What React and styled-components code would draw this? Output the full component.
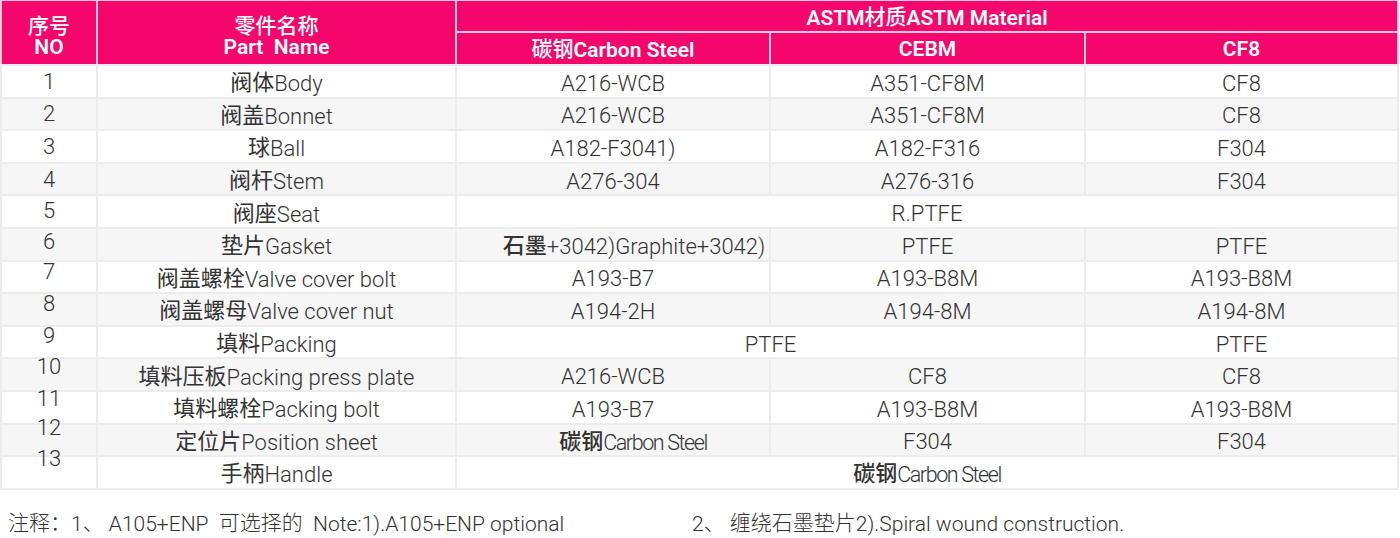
import React from "react";
import styled, { createGlobalStyle } from "styled-components";

const Global = createGlobalStyle`
  html, body { margin: 0; padding: 0; background: #ffffff; }
  body { font-family: "Roboto", "Noto Sans CJK SC", sans-serif; color: #333333; }
`;

const COLS = "94px 357px 312px 313px 311px";
const PINK = "#f5066c";

const Sheet = styled.div`
  width: 1399px;
`;

const HeadGrid = styled.div`
  display: grid;
  grid-template-columns: ${COLS};
  grid-template-rows: 30px 31px;
  gap: 2px;
  padding: 1px 2px 0 2px;
  background: #f8cadc;
`;

const HeadCell = styled.div`
  grid-column: ${(p) => p.$col || "auto"};
  grid-row: ${(p) => p.$row || "auto"};
  background: ${PINK};
  color: #ffffff;
  font-family: "Roboto", "Noto Sans CJK SC", sans-serif;
  font-weight: 600;
  font-size: 21px;
  line-height: 23px;
  display: flex;
  flex-direction: column;
  align-items: center;
  justify-content: center;
  text-align: center;
  white-space: pre;
  padding-top: ${(p) => (p.$tall ? "6px" : "1px")};
`;

const HeadHan = styled.span`
  font-family: "Noto Sans CJK SC", sans-serif;
  font-size: 21px;
  font-weight: 500;
  line-height: 23px;
  vertical-align: 1px;
`;

const BodyGrid = styled.div`
  display: grid;
  grid-template-columns: ${COLS};
  grid-auto-rows: 30.6px;
  gap: 2px;
  padding: 2px;
  background: #ececec;
`;

const Cell = styled.div`
  grid-column: ${(p) => (p.$span ? `span ${p.$span}` : "auto")};
  background: ${(p) => (p.$alt ? "#f6f6f6" : "#ffffff")};
  display: flex;
  align-items: center;
  justify-content: center;
  font-size: 22px;
  font-weight: 300;
  color: #333333;
  white-space: nowrap;
  padding-left: ${(p) => p.$indent || 0}px;
  padding-top: 5px;
`;

const NumCell = styled(Cell)`
  padding-top: 0;
  padding-bottom: ${(p) => p.$lift * 2}px;
`;

const Label = styled.span`
  line-height: 26px;
`;

const Han = styled.span`
  font-family: "Noto Sans CJK SC", sans-serif;
  font-weight: ${(p) => p.$weight || 400};
  font-size: ${(p) => p.$size || 22}px;
  line-height: 20px;
  vertical-align: 1px;
`;

const Condensed = styled.span`
  font-size: 21.5px;
  letter-spacing: -1.4px;
`;

const Notes = styled.div`
  display: grid;
  grid-template-columns: 684px auto;
  padding: 21px 0 0 8px;
  font-size: 21px;
  font-weight: 300;
  color: #333333;
  white-space: pre;
`;

const CarbonSteel = () => (
  <>
    <Han $weight={500}>碳钢</Han>
    <Condensed>Carbon Steel</Condensed>
  </>
);

const rows = [
  { zh: "阀体", en: "Body", cells: [["A216-WCB"], ["A351-CF8M"], ["CF8"]] },
  { zh: "阀盖", en: "Bonnet", cells: [["A216-WCB"], ["A351-CF8M"], ["CF8"]] },
  { zh: "球", en: "Ball", cells: [["A182-F3041)"], ["A182-F316"], ["F304"]] },
  { zh: "阀杆", en: "Stem", cells: [["A276-304"], ["A276-316"], ["F304"]] },
  { zh: "阀座", en: "Seat", cells: [["R.PTFE", 3]] },
  {
    zh: "垫片",
    en: "Gasket",
    cells: [["graphite", 1, 42], ["PTFE"], ["PTFE"]],
  },
  { zh: "阀盖螺栓", en: "Valve cover bolt", cells: [["A193-B7"], ["A193-B8M"], ["A193-B8M"]] },
  { zh: "阀盖螺母", en: "Valve cover nut", cells: [["A194-2H"], ["A194-8M"], ["A194-8M"]] },
  { zh: "填料", en: "Packing", cells: [["PTFE", 2], ["PTFE"]] },
  { zh: "填料压板", en: "Packing press plate", cells: [["A216-WCB"], ["CF8"], ["CF8"]] },
  { zh: "填料螺栓", en: "Packing bolt", cells: [["A193-B7"], ["A193-B8M"], ["A193-B8M"]] },
  { zh: "定位片", en: "Position sheet", cells: [["carbon", 1, 40], ["F304"], ["F304"]] },
  { zh: "手柄", en: "Handle", cells: [["carbon", 3]] },
];

const lifts = [0, 0, 0, 0, 1.5, 2.5, 5, 6, 7, 8.5, 9, 12, 14];

const renderValue = (v) => {
  if (v === "carbon") return <CarbonSteel />;
  if (v === "graphite")
    return (
      <>
        <Han $weight={500}>石墨</Han>+3042)Graphite+3042)
      </>
    );
  return v;
};

export default function App() {
  return (
    <>
      <Global />
      <Sheet>
        <HeadGrid>
          <HeadCell $col="1" $row="1 / span 2" $tall>
            <HeadHan>序号</HeadHan>
            <span>NO</span>
          </HeadCell>
          <HeadCell $col="2" $row="1 / span 2" $tall>
            <HeadHan>零件名称</HeadHan>
            <span>Part  Name</span>
          </HeadCell>
          <HeadCell $col="3 / span 3" $row="1">
            <span>
              ASTM<HeadHan>材质</HeadHan>ASTM Material
            </span>
          </HeadCell>
          <HeadCell $col="3" $row="2">
            <span>
              <HeadHan>碳钢</HeadHan>Carbon Steel
            </span>
          </HeadCell>
          <HeadCell $col="4" $row="2">CEBM</HeadCell>
          <HeadCell $col="5" $row="2">CF8</HeadCell>
        </HeadGrid>
        <BodyGrid>
          {rows.map((r, i) => {
            const alt = i % 2 === 1;
            return (
              <React.Fragment key={i}>
                <NumCell $alt={alt} $lift={lifts[i]}>
                  {i + 1}
                </NumCell>
                <Cell $alt={alt}>
                  <Label>
                    <Han>{r.zh}</Han>
                    {r.en}
                  </Label>
                </Cell>
                {r.cells.map(([v, span, indent], j) => (
                  <Cell key={j} $alt={alt} $span={span} $indent={indent}>
                    <Label>{renderValue(v)}</Label>
                  </Cell>
                ))}
              </React.Fragment>
            );
          })}
        </BodyGrid>
        <Notes>
          <span>
            <Han $weight={300} $size={21}>注释：</Han>1<Han $weight={300} $size={21}>、</Han> A105+ENP  <Han $weight={300} $size={21}>可选择的</Han>  Note:1).A105+ENP optional
          </span>
          <span>
            2<Han $weight={300} $size={21}>、</Han> <Han $weight={300} $size={21}>缠绕石墨垫片</Han>2).Spiral wound construction.
          </span>
        </Notes>
      </Sheet>
    </>
  );
}
